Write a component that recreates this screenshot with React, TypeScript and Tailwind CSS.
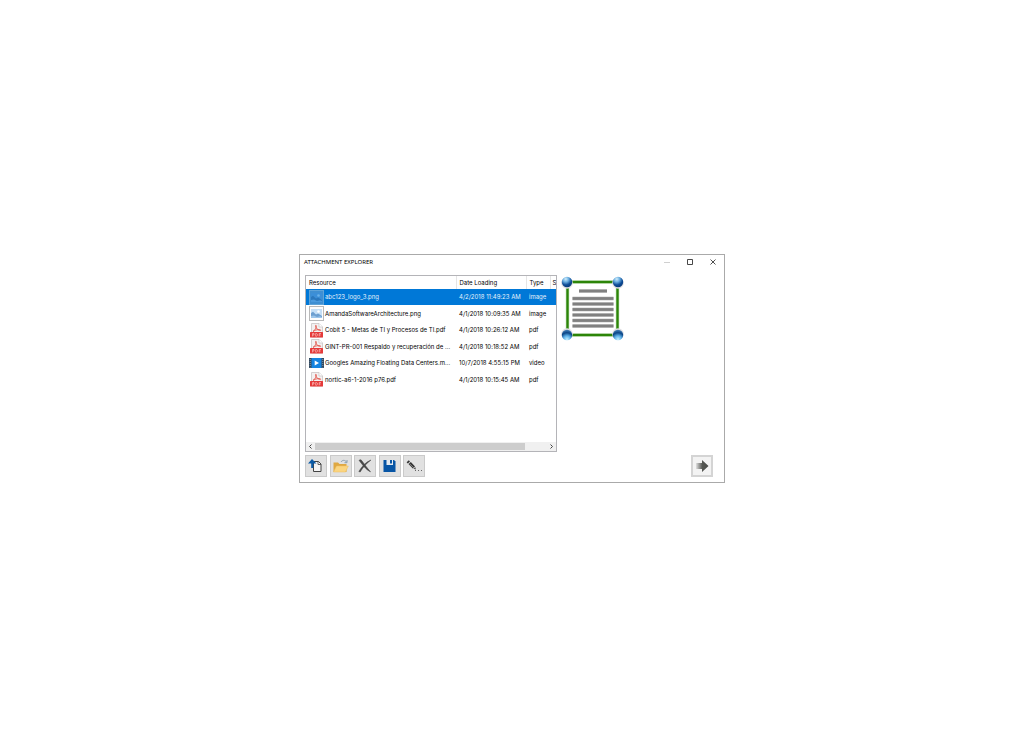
import { useState, type ReactNode } from "react";

type Kind = "image" | "pdf" | "video";

interface Attachment {
  name: string;
  date: string;
  type: Kind;
}

const attachments: Attachment[] = [
  { name: "abc123_logo_3.png", date: "4/2/2018 11:49:23 AM", type: "image" },
  { name: "AmandaSoftwareArchitecture.png", date: "4/1/2018 10:09:35 AM", type: "image" },
  { name: "Cobit 5 - Metas de TI y Procesos de TI.pdf", date: "4/1/2018 10:26:12 AM", type: "pdf" },
  { name: "GINT-PR-001 Respaldo y recuperación de ...", date: "4/1/2018 10:18:52 AM", type: "pdf" },
  { name: "Googles Amazing Floating Data Centers.m...", date: "10/7/2018 4:55:15 PM", type: "video" },
  { name: "nortic-a6-1-2016 p76.pdf", date: "4/1/2018 10:15:45 AM", type: "pdf" },
];

function ImageIcon({ selected }: { selected: boolean }) {
  return (
    <svg viewBox="0 0 15 15" className="block size-[15px] shrink-0" aria-hidden="true">
      <rect x="0.5" y="0.5" width="14" height="14" fill={selected ? "#3f8fd2" : "#fdfdfd"} stroke={selected ? "#5fa3d8" : "#b9b9b9"} />
      <rect x="2" y="3" width="11" height="9" fill={selected ? "#3c8fd8" : "#c5dff6"} />
      <circle cx="9.5" cy="5.5" r="1.3" fill={selected ? "#6bb2ea" : "#ffffff"} />
      <path d="M2 7 L4 5.8 L7 8.5 L9 7.6 L13 10 V12 H2Z" fill={selected ? "#2b78bd" : "#6d9fd0"} />
      <path d="M2 10 L5 9.4 L8 11 L11 10.2 L13 11 V12 H2Z" fill={selected ? "#4a9ade" : "#9cc5ea"} />
    </svg>
  );
}

function PdfIcon() {
  return (
    <svg viewBox="0 0 15 15" className="block size-[15px] shrink-0" aria-hidden="true">
      <path d="M2.5 0.5 H10 L13.5 4 V14 H2.5Z" fill="#f3f1f1" stroke="#c9c4c4" strokeWidth="0.8" />
      <path d="M10 0.5 V4 H13.5" fill="#ffffff" stroke="#c9c4c4" strokeWidth="0.7" />
      <path d="M4 8.4 C6 7.4 7.6 4.6 7.2 2.6 C6.6 1.4 6.2 3.4 7.4 5 C8.6 6.8 10.4 7.8 11.6 7.3 C12 6.2 7.6 6.2 4 8.4Z" fill="none" stroke="#e2574c" strokeWidth="0.9" />
      <rect x="1" y="9" width="13" height="5.5" rx="0.5" fill="#e53a3a" />
      <path d="M3.5 13.4 V10.5 H5 V12 H3.7 M6.7 10.5 V13.2 H7.5 L8.4 12.5 V11.2 L7.5 10.5Z M10.2 13.4 V10.5 H12 M10.2 12 H11.7" fill="none" stroke="#ffd4d2" strokeWidth="0.6" />
    </svg>
  );
}

function VideoIcon() {
  return (
    <svg viewBox="0 0 15 15" className="block size-[15px] shrink-0" aria-hidden="true">
      <rect x="0" y="2" width="15" height="10" fill="#31485e" />
      <rect x="2.5" y="2" width="10" height="10" fill="#1584e0" />
      <path d="M1.2 3 V11.5 M13.8 3 V11.5" stroke="#8fa3b5" strokeWidth="0.9" strokeDasharray="1 1" />
      <path d="M5.7 4.5 L10 7 L5.7 9.5Z" fill="#ffffff" />
    </svg>
  );
}

function KindIcon({ kind, selected }: { kind: Kind; selected: boolean }) {
  if (kind === "image") return <ImageIcon selected={selected} />;
  if (kind === "pdf") return <PdfIcon />;
  return <VideoIcon />;
}

function ToolButton({ label, children }: { label: string; children: ReactNode }) {
  return (
    <button
      type="button"
      aria-label={label}
      className="flex size-[22px] items-center justify-center border border-[#cacaca] bg-[#e1e1e1] hover:border-[#0078d7] hover:bg-[#e5f1fb]"
    >
      {children}
    </button>
  );
}

function DocumentPreview() {
  const corners = [
    [7, 7, "url(#ballTop)"],
    [58, 7, "url(#ballTop)"],
    [7, 60, "url(#ballBottom)"],
    [58, 60, "url(#ballBottom)"],
  ] as const;
  return (
    <svg viewBox="0 0 66 68" className="block h-[68px] w-[66px]" role="img" aria-label="Document preview">
      <defs>
        <radialGradient id="ballTop" cx="0.38" cy="0.22" r="0.8">
          <stop offset="0" stopColor="#d2eefc" />
          <stop offset="0.35" stopColor="#6aaee0" />
          <stop offset="0.7" stopColor="#0e4c96" />
          <stop offset="1" stopColor="#0a3c7c" />
        </radialGradient>
        <radialGradient id="ballBottom" cx="0.5" cy="0.92" r="0.85">
          <stop offset="0" stopColor="#c4efff" />
          <stop offset="0.4" stopColor="#5cb0e8" />
          <stop offset="0.75" stopColor="#0b4586" />
          <stop offset="1" stopColor="#3874ae" />
        </radialGradient>
      </defs>
      <rect x="7.5" y="7" width="50" height="53" fill="#ffffff" stroke="#a9cf9c" strokeWidth="3.4" />
      <rect x="7.5" y="7" width="50" height="53" fill="none" stroke="#2c8508" strokeWidth="2.2" />
      <rect x="19" y="14" width="28" height="4" fill="#d2d2d2" />
      <rect x="19" y="14.6" width="28" height="2.8" fill="#808080" />
      {[21.5, 27, 32.5, 38, 43.5, 49].map((y) => (
        <g key={y}>
          <rect x="12.5" y={y} width="41" height="4" fill="#d2d2d2" />
          <rect x="12.5" y={y + 0.6} width="41" height="2.8" fill="#808080" />
        </g>
      ))}
      {corners.map(([x, y, fill]) => (
        <g key={`${x}-${y}`}>
          <circle cx={x} cy={y < 30 ? y + 1 : y - 1} r="5.8" fill="#dedee2" />
          <circle cx={x} cy={y} r="5.2" fill={fill} />
        </g>
      ))}
    </svg>
  );
}

export default function App() {
  const [selected, setSelected] = useState(0);

  return (
    <div className="flex min-h-screen items-center justify-center bg-white pb-px font-['Noto_Sans','Open_Sans',sans-serif] text-[6px] leading-[10px] text-black">
      <main className="w-full max-w-[426px] border border-[#aaaaaa] bg-white">
        <header className="flex h-[14px] items-center justify-between pl-1">
          <h1>ATTACHMENT EXPLORER</h1>
          <div className="flex">
            <button type="button" aria-label="Minimize" disabled className="flex h-[14px] w-[23px] items-center justify-center">
              <svg viewBox="0 0 6 6" className="size-[6px]"><path d="M0 3.5H6" stroke="#d0d0d0" /></svg>
            </button>
            <button type="button" aria-label="Maximize" className="flex h-[14px] w-[23px] items-center justify-center">
              <svg viewBox="0 0 6 6" className="size-[6px]"><path d="M0.5 0.5H5.5V5.5H0.5Z" fill="none" stroke="#333333" strokeWidth="0.9" /></svg>
            </button>
            <button type="button" aria-label="Close" className="flex h-[14px] w-[23px] items-center justify-center">
              <svg viewBox="0 0 6 6" className="size-[6px]"><path d="M0.5 0.5L5.5 5.5M5.5 0.5L0.5 5.5" stroke="#222222" strokeWidth="0.8" /></svg>
            </button>
          </div>
        </header>

        <div className="flex items-start gap-[3px] px-[5px] pt-[6px]">
          <section className="w-[252px] border border-[#b4b4b8]">
            <div className="h-[166px] overflow-hidden font-['Inter','Noto_Sans',sans-serif]">
              <table className="w-[300px] table-fixed border-collapse text-left">
                <colgroup>
                  <col className="w-[150px]" />
                  <col className="w-[70px]" />
                  <col className="w-[24px]" />
                  <col />
                </colgroup>
                <thead>
                  <tr className="h-[13px]">
                    <th className="border-r border-[#e5e5e5] p-0 pl-[3px] font-normal">Resource</th>
                    <th className="border-r border-[#e5e5e5] p-0 pl-[3px] font-normal">Date Loading</th>
                    <th className="border-r border-[#e5e5e5] p-0 pl-[3px] font-normal">Type</th>
                    <th className="p-0 pl-[2px] font-normal">Size</th>
                  </tr>
                </thead>
                <tbody>
                  {attachments.map((item, index) => (
                    <tr
                      key={item.name}
                      onClick={() => setSelected(index)}
                      aria-selected={selected === index}
                      className={
                        selected === index
                          ? "h-4 bg-[#0078d7] text-[#e4f1fb] even:h-[17px]"
                          : "h-4 even:h-[17px]"
                      }
                    >
                      <td className="p-0 pl-[3px]">
                        <div className="flex items-center gap-px whitespace-nowrap">
                          <KindIcon kind={item.type} selected={selected === index} />
                          <span>{item.name}</span>
                        </div>
                      </td>
                      <td className="p-0 pl-[3px] whitespace-nowrap">{item.date}</td>
                      <td className="p-0 pl-[3px]">{item.type}</td>
                      <td className="p-0" />
                    </tr>
                  ))}
                </tbody>
              </table>
            </div>
            <div className="flex h-[9px] items-center bg-[#f0f0f0]">
              <button type="button" aria-label="Scroll left" className="flex w-[9px] shrink-0 items-center justify-center">
                <svg viewBox="0 0 5 5" className="size-[5px]"><path d="M3.5 0.5L1.5 2.5L3.5 4.5" fill="none" stroke="#444444" /></svg>
              </button>
              <div className="flex h-[7px] grow">
                <div className="w-[91%] bg-[#cdcdcd]" />
              </div>
              <button type="button" aria-label="Scroll right" className="flex w-[10px] shrink-0 items-center justify-center">
                <svg viewBox="0 0 5 5" className="size-[5px]"><path d="M1.5 0.5L3.5 2.5L1.5 4.5" fill="none" stroke="#444444" /></svg>
              </button>
            </div>
          </section>
          <DocumentPreview />
        </div>

        <footer className="flex items-center justify-between pt-[3px] pr-[11px] pb-[5px] pl-[5px]">
          <div className="flex w-[120px] justify-between">
            <ToolButton label="New attachment">
              <svg viewBox="0 0 16 16" className="size-4">
                <path d="M5.5 3.5H10.5L13 6V13.5H5.5Z" fill="#f5f5f5" stroke="#444444" />
                <path d="M10 3.5V6.5H13" fill="none" stroke="#444444" strokeWidth="0.8" />
                <path d="M4 1L8.5 5.5H5.3V10H3.2V5.5H0Z" fill="#0a5aa6" />
              </svg>
            </ToolButton>
            <ToolButton label="Open">
              <svg viewBox="0 0 16 16" className="size-4">
                <path d="M0.5 14V4.5H5L6.5 6H13.5V14Z" fill="#dfa842" />
                <path d="M0.5 14L3.5 8H15.3L12.5 14Z" fill="#fbd580" stroke="#edbf60" strokeWidth="0.5" />
                <path d="M8 4C9.5 1.8 12 1.8 13.5 4M14 2V4.7H11.5" fill="none" stroke="#8298ad" strokeWidth="0.9" />
              </svg>
            </ToolButton>
            <ToolButton label="Delete">
              <svg viewBox="0 0 16 16" className="size-4">
                <path d="M2 2.2L4 1.8C6 4.2 10 10 13.5 13.8C9.5 12 5.5 7 2 2.2Z" fill="#484848" stroke="#484848" strokeWidth="0.6" />
                <path d="M14 2C10 5 6 9 3.2 14L1.8 13.5C5 8 9 4 14 2Z" fill="#484848" stroke="#484848" strokeWidth="0.5" />
              </svg>
            </ToolButton>
            <ToolButton label="Save">
              <svg viewBox="0 0 16 16" className="size-4">
                <path d="M1.5 2H12L13.5 3.5V14H1.5Z" fill="#0755a5" />
                <rect x="4.5" y="2" width="6.5" height="5" fill="#e4eaf0" />
                <rect x="8" y="2" width="2" height="3.5" fill="#0755a5" />
              </svg>
            </ToolButton>
            <ToolButton label="Edit">
              <svg viewBox="0 0 16 16" className="size-4">
                <path d="M0.6 4.2L2.8 2.2L4 3.4L1.8 5.4Z" fill="#333333" />
                <path d="M2.5 6L4.8 4L9 8.4L6.8 10.4Z" fill="#333333" />
                <path d="M3.6 5.8L7.8 9.8" stroke="#bbbbbb" strokeWidth="0.6" />
                <path d="M7.4 10.7L9.3 9L10 11.6Z" fill="#555555" />
                <path d="M9 12.5H10M12 12.5H13M15 12.5H16" stroke="#666666" />
              </svg>
            </ToolButton>
          </div>
          <button
            type="button"
            aria-label="Next"
            className="flex size-[22px] items-center justify-center border-2 border-[#d4d4d4] bg-[#f3f3f3]"
          >
            <svg viewBox="0 0 16 16" className="size-4 shrink-0">
              <defs>
                <linearGradient id="arrowFade" x1="0" x2="1">
                  <stop offset="0" stopColor="#e0e0e0" />
                  <stop offset="0.5" stopColor="#555753" />
                  <stop offset="1" stopColor="#4a4c49" />
                </linearGradient>
              </defs>
              <path d="M2 5H8V2L14.5 8L8 14V11H2Z" fill="url(#arrowFade)" />
            </svg>
          </button>
        </footer>
      </main>
    </div>
  );
}
